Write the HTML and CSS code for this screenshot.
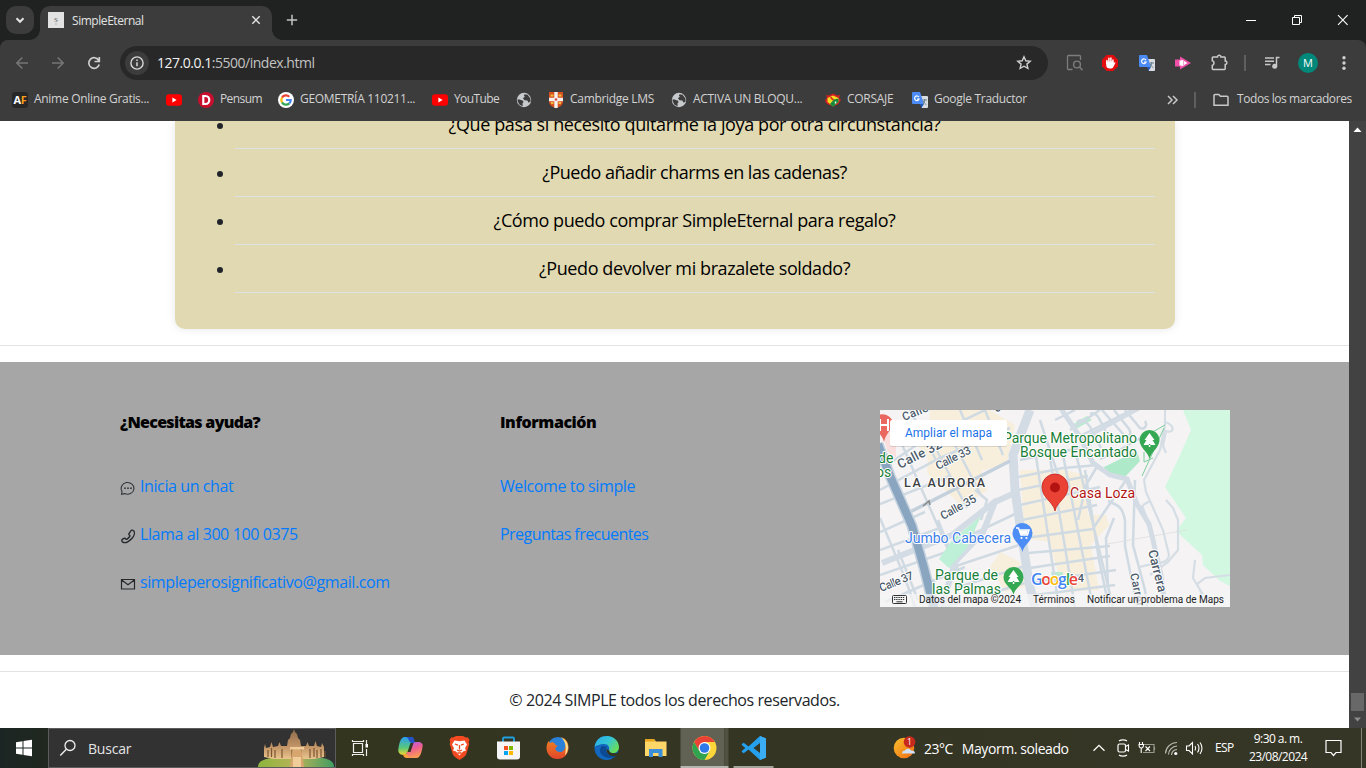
FILE: index.html
```html
<!DOCTYPE html>
<html lang="es">
<head>
<meta charset="utf-8">
<title>SimpleEternal</title>
<link rel="stylesheet" href="styles.css">
</head>
<body>
<svg width="0" height="0" class="defs">
  <defs>
    <symbol id="yt" viewBox="0 0 16 16"><rect y="2.2" width="16" height="11.6" rx="3" fill="#f00"/><path d="M6.4 5.6v4.8L10.6 8z" fill="#fff"/></symbol>
    <symbol id="globe" viewBox="0 0 16 16"><circle cx="8" cy="8" r="7.2" fill="#c7cacd"/><path d="M1.800 7.200l1.700.3 3.600 1.200.4 1.600-1 1 .2 3-3.200-1.500L1.500 9zM8.600 2.200l3 .6 2.600 3.400.5 3-2 1.600-1.400-2.300-2.800-.3L6.900 6.200l1.900-1.400-.9-1.300z" fill="#3c3c3c"/></symbol>
    <symbol id="trad" viewBox="0 0 16 16"><path d="M6 4h9a1 1 0 0 1 1 1v10a1 1 0 0 1-1 1H10z" fill="#d9dce0"/><path d="M1 0h7l4 12H1a1 1 0 0 1-1-1V1a1 1 0 0 1 1-1z" fill="#4c8bf5"/><path d="M8 12h4l-2.600 4z" fill="#1f56b8"/><path d="M6.900 5.100A2.300 2.300 0 1 0 7.100 7H5" fill="none" stroke="#fff" stroke-width="1.200"/><path d="M10.500 8h4.500M12.700 7v1c0 2-1 3.500-2 4.300M11.400 9c.6 1.800 1.600 2.800 3 3.600" fill="none" stroke="#5c7684" stroke-width=".9"/></symbol>
    <linearGradient id="cop2" x2=".3" y2="1"><stop offset="0" stop-color="#b25cf0"/><stop offset=".5" stop-color="#ee5f90"/><stop offset="1" stop-color="#fb9a55"/></linearGradient>
    <linearGradient id="cop0" y2="1" x2="0"><stop offset="0" stop-color="#2a9df0"/><stop offset=".6" stop-color="#58c878"/><stop offset="1" stop-color="#f4d52e"/></linearGradient>
    <linearGradient id="edgeg" x2="1" y2=".6"><stop offset="0" stop-color="#2aa9e8"/><stop offset=".55" stop-color="#34c6d6"/><stop offset="1" stop-color="#69dc5b"/></linearGradient>
    <linearGradient id="ff" y2="1" x2="0"><stop offset="0" stop-color="#f08a22"/><stop offset="1" stop-color="#e0452a"/></linearGradient>
    <linearGradient id="sun" y2="1" x2="1"><stop offset="0" stop-color="#fbc02d"/><stop offset="1" stop-color="#ee6a12"/></linearGradient>
    <linearGradient id="stone" y2="1" x2="0"><stop offset="0" stop-color="#8d6a4b"/><stop offset=".6" stop-color="#c39566"/><stop offset="1" stop-color="#e9c48e"/></linearGradient>
    <linearGradient id="grass" x2="1" y2="0"><stop offset="0" stop-color="#8bb53d"/><stop offset=".5" stop-color="#b9b358"/><stop offset="1" stop-color="#3f9e62"/></linearGradient>
  </defs>
</svg>

<header class="tabs">
  <div class="tabsearch"><svg width="28" height="28" viewBox="0 0 28 28"><path d="M10.500 12.300l3.500 3.500 3.500-3.500" fill="none" stroke="#e4e4e4" stroke-width="2"/></svg></div>
  <div class="tab">
    <svg width="16" height="16" viewBox="0 0 16 16"><rect width="16" height="16" fill="#e2e2e2"/><text x="8" y="10" font-size="7" text-anchor="middle" fill="#555" font-family="Liberation Serif, serif">S</text><path d="M7 12h2" stroke="#999" stroke-width=".7"/></svg>
    <span class="tabtitle">SimpleEternal</span>
    <svg width="10" height="10" viewBox="0 0 10 10"><path d="M1.300 1.300l7.400 7.400M8.700 1.300L1.300 8.700" stroke="#e0e0e0" stroke-width="1.500"/></svg>
  </div>
  <svg class="plus" width="12" height="12" viewBox="0 0 12 12"><path d="M6 .8v10.400M.8 6h10.400" stroke="#c4c4c4" stroke-width="1.500"/></svg>
  <div class="winbtns">
    <svg width="46" height="40" viewBox="0 0 46 40"><path d="M18 20.500h10" stroke="#fff"/></svg>
    <svg width="46" height="40" viewBox="0 0 46 40"><path d="M18.500 17.500h7v7h-7zM20.500 17.500v-2h7v7h-2" fill="none" stroke="#fff"/></svg>
    <svg width="46" height="40" viewBox="0 0 46 40"><path d="M18 15.200l9.600 9.600M27.600 15.200L18 24.800" stroke="#fff" stroke-width="1.100"/></svg>
  </div>
</header>

<section class="chrome">
<div class="toolbar">
  <svg viewBox="0 0 36 36"><path d="M24 18H13M18.300 12.500L12.800 18l5.500 5.500" fill="none" stroke="#757575" stroke-width="1.600"/></svg>
  <svg viewBox="0 0 36 36"><path d="M12 18h11M17.700 12.500l5.500 5.500-5.500 5.500" fill="none" stroke="#757575" stroke-width="1.600"/></svg>
  <svg viewBox="0 0 36 36"><path d="M22.600 15.200A5.300 5.300 0 1 0 23.200 19.500M23.300 12v4.500h-4.800" fill="none" stroke="#d0d0d0" stroke-width="1.700"/></svg>
  <div class="omni">
    <i class="info"><svg width="14" height="14" viewBox="0 0 14 14"><circle cx="7" cy="7" r="6.100" fill="none" stroke="#d8d8d8" stroke-width="1.400"/><path d="M7 6.200v4M7 3.600V5" stroke="#d8d8d8" stroke-width="1.500"/></svg></i>
    <span class="url"><b>127.0.0.1</b>:5500/index.html</span>
    <svg class="star" width="16" height="16" viewBox="0 0 16 16"><path d="M8 1.800l1.800 4 4.400.4-3.300 2.900 1 4.300L8 11.200l-3.900 2.200 1-4.300L1.800 6.200l4.400-.4z" fill="none" stroke="#cfcfcf" stroke-width="1.400"/></svg>
  </div>
  <svg viewBox="0 0 36 36"><path d="M24.500 15v-3.500a1 1 0 0 0-1-1h-11a1 1 0 0 0-1 1v12a1 1 0 0 0 1 1h4" fill="none" stroke="#7d7d7d" stroke-width="1.300"/><circle cx="21" cy="19.500" r="3.400" fill="none" stroke="#7d7d7d" stroke-width="1.400"/><path d="M23.500 22l3 3.300" stroke="#7d7d7d" stroke-width="1.500"/></svg>
  <svg viewBox="0 0 36 36"><path d="M14.700 10h6.600l4.700 4.700v6.600L21.300 26h-6.600L10 21.300v-6.600z" fill="#e40d0d"/><path d="M14.900 18.500v-3M16.900 17v-3.800M18.900 17v-4M20.900 18v-3" stroke="#fff" stroke-width="1.500" stroke-linecap="round"/><path d="M14.200 16.500h7.400v2l1.300-1.500.6.700-2.300 4.500c-.6 1-1.500 1.300-3.200 1.300-2.400 0-3.800-1-3.800-3.500z" fill="#fff"/></svg>
  <svg viewBox="0 0 36 36"><use href="#trad" x="10" y="10" width="16" height="16"/></svg>
  <svg viewBox="0 0 36 36"><path d="M10 14.500h5V11.500L26 18l-11 6.500v-3h-5z" fill="#f04fa8"/><path d="M14.500 15.500h2v-1l6 3.500-6 3.500v-1h-2z" fill="#fff"/><path d="M18.500 15v6" stroke="#f6a1d0"/></svg>
  <svg viewBox="0 0 36 36"><path d="M12.500 12h4a1.700 1.700 0 1 1 3.400 0h3.600a.7.700 0 0 1 .7.700v3.400a1.700 1.700 0 1 1 0 3.400v4.300a.7.700 0 0 1-.7.700H12a.7.700 0 0 1-.7-.7v-3.400a2.400 2.400 0 0 0 0-4.600v-3.100a.7.700 0 0 1 .7-.7z" fill="none" stroke="#cbcbcb" stroke-width="1.500"/></svg>
  <i class="sep"></i>
  <svg viewBox="0 0 36 36"><path d="M11 13h9M11 16.300h9M11 19.600h5.500M22.500 21v-8.500H25.500" fill="none" stroke="#c8c8c8" stroke-width="1.500"/><circle cx="20.700" cy="21.300" r="2.500" fill="#c8c8c8"/></svg>
  <i class="avatar">M</i>
  <svg viewBox="0 0 36 36" fill="#cfcfcf"><circle cx="18" cy="12.700" r="1.700"/><circle cx="18" cy="18" r="1.700"/><circle cx="18" cy="23.300" r="1.700"/></svg>
</div>
<nav class="marks">
  <svg viewBox="0 0 16 16"><rect width="16" height="16" rx="3" fill="#272727"/><text x="1.500" y="12.200" font-size="10.500" font-weight="700" textLength="13" lengthAdjust="spacingAndGlyphs" fill="#fff" font-family="Open Sans, sans-serif">A<tspan fill="#f9a11b">F</tspan></text></svg><span>Anime Online Gratis...</span>
  <svg viewBox="0 0 16 16"><use href="#yt"/></svg>
  <svg viewBox="0 0 16 16"><circle cx="8" cy="8" r="8" fill="#c8102e"/><path d="M5.300 4h2.200c5 0 5 8 0 8H5.300z" fill="none" stroke="#fff" stroke-width="2.200"/></svg><span class="tight">Pensum</span>
  <svg viewBox="0 0 16 16"><circle cx="8" cy="8" r="8" fill="#fff"/><g fill="none" stroke-width="2.200"><path d="M11.300 4.700A4.700 4.700 0 0 0 4 5.600" stroke="#ea4335"/><path d="M4 5.600a4.700 4.700 0 0 0 0 4.800" stroke="#fbbc05"/><path d="M4 10.400a4.700 4.700 0 0 0 7.300 1" stroke="#34a853"/><path d="M11.300 11.400A4.700 4.700 0 0 0 12.700 8H8" stroke="#4285f4"/></g></svg><span>GEOMETRÍA 110211...</span>
  <svg viewBox="0 0 16 16"><use href="#yt"/></svg><span class="tight">YouTube</span>
  <svg viewBox="0 0 16 16"><use href="#globe"/></svg>
  <svg viewBox="0 0 16 16"><path d="M1 0h14v9c0 4-3 6-7 7-4-1-7-3-7-7z" fill="#d8501f"/><path d="M8 0v16M1 7.500h14" stroke="#f4f1ee" stroke-width="3.400"/><path d="M2.500 3.500h3M10.500 3.500h3M3 11h2.500M10.500 11H13" stroke="#f0b83a" stroke-width="2"/><path d="M6.800 7.500h2.400" stroke="#d33" stroke-width="2"/></svg><span>Cambridge LMS</span>
  <svg viewBox="0 0 16 16"><use href="#globe"/></svg><span>ACTIVA UN BLOQU...</span>
  <svg viewBox="0 0 16 16"><path d="M1 3l3 .5 4-2 4 2L15 3l-1 3 2 2-2 3-2 2H4l-3-2-1-3 2-2z" fill="#d42020"/><path d="M2.500 6L8 3.500 13.500 6v4L8 14.500 2.500 10z" fill="#f4d922"/><path d="M8 14.500l5.500-4.500V6.500L9 7.500 5 12z" fill="#138a3c"/><path d="M5.500 5.300l3 3" stroke="#d42020" stroke-width="1.600"/><path d="M10.500 9.500v2" stroke="#fff" stroke-width="1.400"/></svg><span>CORSAJE</span>
  <svg viewBox="0 0 16 16"><use href="#trad"/></svg><span>Google Traductor</span>
  <svg viewBox="0 0 16 16"><path d="M2 4l4 4-4 4M7 4l4 4-4 4" fill="none" stroke="#c8c8c8" stroke-width="1.500"/></svg>
  <i class="sep"></i>
  <svg viewBox="0 0 16 16"><path d="M1 13.200V3.500a1 1 0 0 1 1-1h3.800l1.600 1.800H14a1 1 0 0 1 1 1v7.900z" fill="none" stroke="#c8c8c8" stroke-width="1.500"/></svg><span class="all">Todos los marcadores</span>
</nav>
</section>

<div class="view">
<main class="page">
  <section class="card">
    <ul>
      <li class="q1">¿Qué pasa si necesito quitarme la joya por otra circunstancia?</li>
      <li class="q2">¿Puedo añadir charms en las cadenas?</li>
      <li class="q3">¿Cómo puedo comprar SimpleEternal para regalo?</li>
      <li class="q4">¿Puedo devolver mi brazalete soldado?</li>
    </ul>
  </section>
  <hr>
  <footer>
    <div>
      <h5>¿Necesitas ayuda?</h5>
      <p><svg width="16" height="16" viewBox="0 0 16 16"><path d="M1.600 14.300l.4-3A6.400 5.900 0 1 1 4.600 13.600z" fill="none" stroke="#30343a" stroke-width="1.100"/><g fill="#30343a"><circle cx="5" cy="8.200" r=".9"/><circle cx="8" cy="8.200" r=".9"/><circle cx="11" cy="8.200" r=".9"/></g></svg><a>Inicia un chat</a></p>
      <p><svg width="16" height="16" viewBox="0 0 16 16"><path d="M10.700 3.200c.5-1 1.700-1.500 2.700-.7 1.700 1.600 1.200 5-1.800 8.200-3.200 3.400-7 4.600-9.200 3.100-.9-.8-.7-2 .2-2.600l1.500-.8c.7-.3 1.300 0 1.800.7.300.4.700.3 1.200 0 1-.7 1.900-1.600 2.600-2.600.4-.6.300-.9-.1-1.200-.8-.5-1-1-.6-1.700z" fill="none" stroke="#25282c" stroke-width="1.400"/></svg><a>Llama al 300 100 0375</a></p>
      <p><svg width="16" height="16" viewBox="0 0 16 16"><path d="M1.500 3.500h13v9.500h-13zM1.700 4L8 8.800 14.300 4" fill="none" stroke="#25282c" stroke-width="1.200"/></svg><a>simpleperosignificativo@gmail.com</a></p>
    </div>
    <div>
      <h5 class="info-title">Información</h5>
      <p><a>Welcome to simple</a></p>
      <p><a class="faq">Preguntas frecuentes</a></p>
    </div>
    <svg class="map" width="350" height="197" viewBox="0 0 350 197">
      <rect width="350" height="197" fill="#f5f3f4"/>
      <g fill="#f7efdc">
        <path d="M50 0h60l25 15-8 38-25 8 5 20-25 15-35-33z"/>
        <path d="M35 32l30-20 20 45-22 10z"/>
        <path d="M140 60l45 0 20 5 3 40 18 0 3 10-18 20 8 45-35 2-15-50-24-4z"/>
        <path d="M120 142l20 10 5 25-20 5-15-25z"/>
        <path d="M145 85h30v25h-30z"/>
      </g>
      <path d="M0 18l16 8 0 22-8-6z" fill="#fbdede"/>
      <path d="M303 0l8 20-11 25-15 32 21 31-10 13 26 24 1 10 17 16 10 5V0z" fill="#d3f8e2"/>
      <g fill="#b8ecd0"><path d="M224 57l33-16 3 10-18 19-14-5z" fill="#aee9c9"/><path d="M192 15l15-9 5 4-16 9zM171 162h12v8h-10z"/></g>
      <g fill="none" stroke="#d0dae3" stroke-width="2.500">
        <path d="M0 60L48 27 105 0M0 80L60 48 130 18M0 94L70 66M0 122L45 102M0 140L60 118M0 165l75-26M5 192l80-35M80 130l55-26M70 158l75-25M75 178l70-22M65 197l80-24"/>
        <path d="M20 30l33 75 26 60M45 18l42 80M62 10l40 77M80 0l22 50M105 0l18 45M30 0l26 50M58 110l22 55M95 80l12 10-6 20M0 108l25 60 10 29M18 140l20 50"/>
        <path d="M140 50l60-12M133 68l50-10 35-3M138 80l70-14M140 95l80-18M142 110l75-15M145 128l68-9M148 143l82-7M150 158l80-12M152 172l84-12M155 185l80-10"/>
        <path d="M155 40l24 157M170 48l25 149M183 45l30 152M197 48l36 149M160 10l18 55M218 55l-12 20-8 35M205 60l14 90 10 47M212 120l34-50M175 10l20-10M190 20l30-20M200 26l100-50"/>
        <path d="M197 12c6-5 12 2 16 10l8 16M210 4c6-3 9 4 12 10l8 18M222 0l22 25c5 3 8-1 5-6L234 0M245 0l15 18c4 2 8-2 5-7M220 49l16-7 35-20M255 70l-2 65 12 45 2 17M228 91c10 4 15 6 17 20l0 25 12 61M234 108l-8 20 2 50"/>
      </g>
      <g fill="none" stroke="#d5dde5" stroke-width="2.200">
        <path d="M285 0v15l-5 25-16 30 2 12 17 38 6 25c-1 10-14 7-29 12M263 95l7-4M262 95l10 28M286 90l7 8 5 12v30l-10 12-18 13M285 12c10 3 10 12 1 9l-3 15 3 7M315 150l-2 18 12 20M350 165l-25 3-8 6 5 10 10 8"/>
      </g>
      <path d="M227 134l80-14" stroke="#ddd" stroke-width=".7"/>
      <path d="M262 66l22-48M285 15l-16 9M264 42v10l9-4" fill="none" stroke="#7bcf9d" stroke-width="1"/>
      <g fill="none" stroke="#d3dce5">
        <path d="M150 0l-17 45 2 35 5 35 9 58 6 24" stroke-width="9"/>
        <path d="M137 82l-22 10-12 30-28 30-13 45M117 90l-45 35-70 28" stroke-width="6"/>
        <path d="M180 -3l20 30 13 26 17 12 17 4 10 25 12 20 4 16 8 35 4 32" stroke-width="5"/>
        <path d="M210 25l70-38" stroke-width="4"/>
      </g>
      <path d="M101 106l-14 32-18 20-10-9 14-20z" fill="#bdf0d6"/>
      <path d="M30 102L130 51" stroke="#c4d0dc" stroke-width="3.500"/>
      <path d="M-2 34l12 32 22 50 12 42 10 40" fill="none" stroke="#c5d2df" stroke-width="11"/>
      <path d="M-2 34l12 32 22 50 12 42 10 40" fill="none" stroke="#8aa5c0" stroke-width="8"/>
      <path d="M43 96l6-5 1 4" fill="none" stroke="#8a8a8a" stroke-width="1.600"/>
      <g class="street">
        <text transform="translate(24 11) rotate(-22)" textLength="27">Calle</text>
        <text transform="translate(20 59) rotate(-27)" font-size="13" textLength="48">Calle 32</text>
        <text transform="translate(58 60) rotate(-27)" textLength="38">Calle 33</text>
        <text transform="translate(63 110) rotate(-29)" textLength="39">Calle 35</text>
        <text transform="translate(1 182) rotate(-22)" textLength="36">Calle 37</text>
        <text transform="translate(117 3) rotate(-40)" font-size="12">8</text>
        <text x="188" y="172" textLength="16">A4</text>
        <text transform="translate(268 141) rotate(76)" font-size="13" textLength="43">Carrera</text>
        <text transform="translate(250 164) rotate(78)" textLength="40">Carrera</text>
      </g>
      <text class="zone" x="24" y="77" textLength="81">LA AURORA</text>
      <g class="park">
        <text x="123" y="33" textLength="134">Parque Metropolitano</text>
        <text x="140" y="47" textLength="117">Bosque Encantado</text>
        <text x="55" y="170" textLength="63">Parque de</text>
        <text x="52" y="184" textLength="69">las Palmas</text>
        <text x="-2" y="53">de</text><text x="-4" y="67">os</text>
      </g>
      <text class="shop" x="25" y="133" textLength="106">Jumbo Cabecera</text>
      <text class="casa" x="190" y="88" textLength="65">Casa Loza</text>
      <path d="M-8 12a11 11 0 0 1 21 0c0 8-7 10-9 20-2-10-12-12-12-20z" fill="#e9685f"/>
      <path d="M0 9v12M8 9v12M0 15h8" stroke="#fff" stroke-width="2"/>
      <path d="M269.500 49c-1-7-10-11-10-19a10 10 0 0 1 20 0c0 8-9 12-10 19z" fill="#34a853"/>
      <path d="M269.500 23l-5 7h2l-3 5h12l-3-5h2zM268.800 34h1.500v3h-1.500z" fill="#fff"/>
      <path d="M133.500 185c-1-7-10-10-10-18a10 10 0 0 1 20 0c0 8-9 11-10 18z" fill="#34a853"/>
      <path d="M133.500 160l-5 7h2l-3 5h12l-3-5h2zM132.800 171h1.500v3h-1.500z" fill="#fff"/>
      <path d="M142.500 142c-1-7-10-11-10-19a10 10 0 0 1 20 0c0 8-9 12-10 19z" fill="#4c8df6"/>
      <path d="M136 118h2.500l2.500 7h6.500l1.500-5h-9" fill="none" stroke="#fff" stroke-width="1.500"/><path d="M139.500 120.500h8.500l-1 4h-6z" fill="#fff"/><circle cx="141.500" cy="128" r="1.100" fill="#fff"/><circle cx="146.500" cy="128" r="1.100" fill="#fff"/>
      <path d="M175 101c-1.500-9-13-13-13-24a13 13 0 0 1 26 0c0 11-11.500 15-13 24z" fill="#ea4335" stroke="#c5221f" stroke-width=".8"/>
      <circle cx="175" cy="77.500" r="5" fill="#b31412"/>
      <rect x="10" y="11" width="117" height="26" rx="2" fill="#000" opacity=".12"/>
      <rect x="10" y="10" width="117" height="26" rx="2" fill="#fff"/>
      <text x="25" y="27" class="big" textLength="87">Ampliar el mapa</text>
      <text x="151" y="175" class="goog" textLength="47"><tspan fill="#4285f4">G</tspan><tspan fill="#ea4335">o</tspan><tspan fill="#fbbc05">o</tspan><tspan fill="#4285f4">g</tspan><tspan fill="#34a853">l</tspan><tspan fill="#ea4335">e</tspan></text>
      <rect y="184" width="350" height="13" fill="#f5f5f5" opacity=".72"/>
      <rect x="12.500" y="185.500" width="14" height="8" rx="1" fill="none" stroke="#333"/><path d="M14 187.500h11M14 189.500h11" stroke="#333" stroke-dasharray="1.400 .8"/><path d="M16.500 191.800h6" stroke="#333"/>
      <g class="legal"><text x="39" y="193" textLength="102">Datos del mapa ©2024</text><text x="153" y="193" textLength="42">Términos</text><text x="207" y="193" textLength="137">Notificar un problema de Maps</text></g>
    </svg>
  </footer>
  <hr>
  <p class="copy">© 2024 SIMPLE todos los derechos reservados.</p>
</main>
<aside class="scroll">
  <svg width="17" height="17" viewBox="0 0 17 17"><path d="M4.500 11L8.500 6.500l4 4.500z" fill="#fff"/></svg>
  <i></i>
  <svg width="17" height="17" viewBox="0 0 17 17"><path d="M5 6.500h7L8.500 10.500z" fill="#8b8b8b"/></svg>
</aside>
</div>

<div class="taskbar">
  <svg viewBox="0 0 48 40"><path d="M16 14.200l6.500-1v6.300H16zM23.500 13l8.500-1.200v7.700h-8.500zM16 20.500h6.500v6.300l-6.500-1zM23.500 20.500H32v7.700L23.500 27z" fill="#fff"/></svg>
  <div class="search">
    <svg width="18" height="18" viewBox="0 0 18 18"><circle cx="11" cy="6.500" r="5" fill="none" stroke="#eee" stroke-width="1.300"/><path d="M7.300 10.300L1.300 16.500" stroke="#eee" stroke-width="1.400"/></svg>
    <span>Buscar</span>
    <svg class="temple" width="78" height="38" viewBox="0 0 78 38"><path d="M1 38c0-6 6-8 14-9h50c8 1 12 4 12 9z" fill="url(#grass)"/><path d="M7 19l1-4 1 4 4-1 1.500-5 1.500 5 5-1 1.500-4 1.500 4h6l1-6 2-2 1-4 2-2 1-3 1 3 2 2 1 4 2 2 1 6h5l1.500-4 1.500 4 5 0 1.500-5 1.500 5 4 1 1-4 2 4v10l-10 2H16L7 28z" fill="url(#stone)"/><path d="M11 21v7M18 21v8M25 20v9M53 20v9M60 21v8M68 22v6M35 20v9M44 20v9M14.500 19v9M57 19v9M64 20v8" stroke="#7c5532" stroke-width="1.200"/><path d="M33 38l2.500-17h9L47 38z" fill="#d7a66e"/><path d="M36 28h8v10h-8zM33 18h14v2.500H33z" fill="#f0cd98"/></svg>
  </div>
  <svg viewBox="0 0 48 40"><path d="M17.500 15.500h9v9h-9zM16.500 12v1.500h11V12M16.500 28v-1.500h11V28M30.500 12v6M30.500 21v7" fill="none" stroke="#eee" stroke-width="1.200"/><path d="M29.500 16h2.500v3.500h-2.500z" fill="#fff"/></svg>
  <div class="apps">
    <svg viewBox="0 0 49 40"><path d="M12.500 20c1-6 2.500-11 6-11h6c3 0 3 2 4 6h-4l-3 9c-1 2-1.500 3-4 3-4 0-6-3-5-7z" fill="url(#cop0)"/><path d="M20 9h5c3 0 3 2 4 6h-3c-3 0-3-5-6-6z" fill="#2450c8"/><path d="M36.500 19c-1 6-2.500 11-6 11h-6c-3 0-3-2-4-6h4l3-9c1-1 1.500-1 4-1 4 0 6 2 5 5z" fill="url(#cop2)"/><path d="M20 30c-2-1-3-2-3-4h4c1 1 1 3 3 4z" fill="#f9a13c"/></svg>
    <svg viewBox="0 0 49 40"><path d="M18 9.500l3-1.500h7l3 1.500 1.500-.3 2 2.600-.8 2.200.6 2-3 10c-.5 2-3.500 4-6.800 6-3.300-2-6.300-4-6.800-6l-3-10 .6-2-.8-2.200 2-2.600z" fill="#f34a22"/><path d="M19.500 12.500l5 .8 5-.8 2.500 4-2 3.800 1 2.200-3 1-3.500 4-3.500-4-3-1 1-2.200-2-3.800z" fill="#fff"/><path d="M20 16l3 1.200M29 16l-3 1.200M24.500 17v4.500M22 22l2.500 1 2.500-1M22.500 25h4" stroke="#f34a22" stroke-width="1.300" fill="none"/></svg>
    <svg viewBox="0 0 49 40"><path d="M19 15V10.500q0-1 1-1h9q1 0 1 1V15" fill="none" stroke="#1fa0e0" stroke-width="1.800"/><path d="M13 13.500h23v15a3 3 0 0 1-3 3H16a3 3 0 0 1-3-3z" fill="#f5f5f7"/><path d="M20 18h4v4h-4z" fill="#f25022"/><path d="M25 18h4v4h-4z" fill="#7fba00"/><path d="M20 23h4v4h-4z" fill="#00a4ef"/><path d="M25 23h4v4h-4z" fill="#ffb900"/></svg>
    <svg viewBox="0 0 49 40"><circle cx="25" cy="19.500" r="10.500" fill="#2b80d8"/><path d="M27 9c7 1 9 7 8.500 12S31 31 24.500 31 13.500 26 13.500 20c0-3 1-6 2.500-7l.8 2c1-1 2.500-1 4-.6l2 2.800 2 .6-2.500 2.400c0 3 4 4.800 7 3.200 4-2 4.500-9-.3-14.400z" fill="url(#ff)"/><path d="M28 9.500c8 3 9 12 4 18 1-6 2-13-4-18z" fill="#ffe08a"/></svg>
    <svg viewBox="0 0 49 40"><circle cx="24.500" cy="20" r="12" fill="#1268bf"/><path d="M12.500 19C14 11 19 8 25 8c7 0 12 5.500 12 11 0 4-3 6-6 6-3.500 0-4.500-1.500-4-3 1-3-1-6-4.500-6-5 0-9 2-10 3z" fill="url(#edgeg)"/><path d="M20 18c-5 5 0 12 8 12 3 0 5-.7 7-2.200-4 1-11-1-11-6 0-1 .4-2 1-3z" fill="#0c4a94"/><path d="M27 22c0 2.500 3.500 4.500 9.500 2.500L34 28c-5 1-10-2-9.500-7z" fill="#34351f"/></svg>
    <svg viewBox="0 0 49 40"><path d="M14 11h9l2 2.500h10.500V28H14z" fill="#ffd668"/><path d="M14 11h9l1.500 2.500H14z" fill="#e8a51d"/><path d="M18 29v-8h13.500v8h-4v-4H22v4z" fill="#3b8fd9"/></svg>
    <svg viewBox="0 0 49 40"><path d="M.5 0h44v38H.5z" fill="#fff" opacity=".22"/><path d="M45 0h3.500v38H45z" fill="#fff" opacity=".14"/><path d="M.5 38h48v2H.5z" fill="#b5b5b0"/><circle cx="24.500" cy="20" r="12" fill="#fdd63a"/><path d="M14.100 14A12 12 0 0 1 34.900 14H24.500l-5.200 9z" fill="#ea4335"/><path d="M14.100 14A12 12 0 0 0 24.500 32l5.200-9h-10.400z" fill="#2fa34f"/><circle cx="24.500" cy="20" r="6" fill="#fff"/><circle cx="24.500" cy="20" r="4.800" fill="#3079e8"/></svg>
    <svg viewBox="0 0 49 40"><path d="M4.500 38h40v2h-40z" fill="#a3a499"/><path d="M31 8l6 2.600v18.800L31 32 19.500 21.500l-4.700 3.700-2-1.300v-1l3.500-2.900-3.500-3v-1l2-1.300 4.700 3.700zM31 15l-6.500 5 6.500 5z" fill="#24a0ec" fill-rule="evenodd"/><path d="M31 8l6 2.600v18.800L31 32z" fill="#3aadf5"/></svg>
  </div>
  <div class="weather">
    <svg width="24" height="24" viewBox="0 0 24 24"><circle cx="11" cy="12" r="10.300" fill="url(#sun)"/><path d="M9 17.500c0-2 1.500-3 3-3 1-2 5-2.500 6 0 3 0 4 1 4 3H9z" fill="#cfe0f7"/><circle cx="16.500" cy="6" r="5.800" fill="#c8291e"/><text x="16.500" y="9" font-size="8.500" text-anchor="middle" fill="#fff" font-family="Open Sans, sans-serif">1</text></svg>
    <span class="temp">23°C</span><span class="sky">Mayorm. soleado</span>
  </div>
  <div class="tray">
    <svg viewBox="0 0 24 40"><path d="M6.500 22.800L12 17.300l5.500 5.500" fill="none" stroke="#fff" stroke-width="1.300"/></svg>
    <svg viewBox="0 0 24 40"><rect x="7" y="16" width="7.500" height="8" rx="1.500" fill="none" stroke="#fff" stroke-width="1.200"/><path d="M14.500 18.500L17.500 17v6l-3-1.500M8 13c2-1.500 6-1.500 8 0M8 27c2 1.500 6 1.500 8 0" fill="none" stroke="#fff" stroke-width="1.100"/></svg>
    <svg viewBox="0 0 24 40"><path d="M9 16.500h10v8H8M19.500 19v3" fill="none" stroke="#999a8e" stroke-width="1.200"/><path d="M4.500 14v3M7.500 14v3M4 16.500h4.500c0 3-1 3.500-2.200 3.500S4 19.500 4 16.500zM6.200 20v5M10.500 18.500l4.500 4.500M15 18.500L10.500 23" fill="none" stroke="#fff" stroke-width="1.100"/></svg>
    <svg viewBox="0 0 24 40"><path d="M6.500 25.500A11.500 11.500 0 0 1 18 14.500M9.500 26.500A9 9 0 0 1 18 18M12.500 27a6 6 0 0 1 5.500-5.500" fill="none" stroke="#b9baae" stroke-width="1.200"/><circle cx="16.800" cy="25.500" r="1.600" fill="#fff"/></svg>
    <svg viewBox="0 0 24 40"><path d="M3.500 18H6l3.500-3.500v11.500L6 22.500H3.500zM12 18q1.500 2 0 4.500M14.500 16q3 4 0 8.500M17 14.500q4 5.500 0 11.500" fill="none" stroke="#fff" stroke-width="1.100"/></svg>
  </div>
  <span class="lang">ESP</span>
  <div class="clock"><span>9:30 a. m.</span><span>23/08/2024</span></div>
  <svg viewBox="0 0 48 40"><path d="M16 12.500h15v12h-5L23.500 27.500l-2.500-3h-5z" fill="none" stroke="#fff" stroke-width="1.200"/></svg>
  <i class="edge"></i>
</div>
</body>
</html>
```
FILE: styles.css
```css
* { box-sizing: border-box; }
body { margin: 0; width: 1366px; height: 768px; overflow: hidden; display: flex; flex-direction: column; font-family: "Open Sans", "Noto Sans", sans-serif; background: #202221; }
svg { display: block; flex: none; }
.defs { position: absolute; }
i { font-style: normal; }
span, a { white-space: nowrap; }

/* browser tab strip */
.tabs { height: 40px; flex: none; display: flex; align-items: center; padding-left: 6px; background: #202221; }
.tabsearch { width: 28px; height: 28px; border-radius: 10px; background: #3c3c3c; }
.tab { position: relative; width: 232px; height: 34px; margin: 6px 0 0 6px; padding: 0 11px 6px 8px; display: flex; align-items: center; background: #3c3c3c; border-radius: 10px 10px 0 0; }
.tab::before, .tab::after { content: ""; position: absolute; bottom: 0; width: 10px; height: 10px; }
.tab::before { left: -10px; background: radial-gradient(circle at 0 0, transparent 9.5px, #3c3c3c 10px); }
.tab::after { right: -10px; background: radial-gradient(circle at 100% 0, transparent 9.5px, #3c3c3c 10px); }
.tabtitle { flex: 1; margin-left: 8px; font-size: 12px; letter-spacing: -.45px; color: #e3e3e3; }
.plus { margin-left: 14px; }
.winbtns { display: flex; margin-left: auto; }

/* toolbar and bookmarks */
.chrome { height: 81px; flex: none; background: #3c3c3c; border-radius: 8px 8px 0 0; }
.toolbar { height: 45px; padding-left: 4px; display: grid; grid-template-columns: 36px 36px 40px 928px 11.500px 36px 37px 36px 36px 36px 17.500px 36px 36px 36px; align-items: center; }
.toolbar > svg { width: 36px; height: 36px; }
.toolbar > :nth-child(5) { grid-column: 6; }
.omni { height: 34px; margin: 1px 0 0 4px; width: 928px; border-radius: 17px; background: #282828; display: flex; align-items: center; padding: 0 16px 0 5px; }
.info { width: 24px; height: 24px; border-radius: 12px; background: #3c3c3c; display: grid; place-items: center; }
.url { margin: -1px 0 0 8px; font-size: 14px; letter-spacing: -.48px; color: #c3c3c3; }
.url b { font-weight: 400; color: #f1f1f1; }
.star { margin-left: auto; }
.sep { width: 2px; height: 16px; justify-self: center; background: #5f5f5f; }
.avatar { width: 20px; height: 20px; border-radius: 10px; justify-self: center; background: #00897b; color: #fff; font-size: 11px; line-height: 20px; text-align: center; }
.marks { height: 29px; padding-left: 12px; display: grid; align-items: center; grid-template-columns: 22px 132px 32px 22px 58px 22px 132px 22px 62px 32px 22px 101px 22px 132px 22px 65px 22px 232px 28px 19px 24px 1fr; font-size: 12px; line-height: 16px; letter-spacing: -.3px; color: #d2d2d2; }
.marks svg { width: 16px; height: 16px; }
.marks span { margin-top: -1px; }
.marks .sep { justify-self: start; }
.marks .all { letter-spacing: -.43px; }
.marks .tight { letter-spacing: -.6px; }

/* visible page */
.view { height: 607px; flex: none; display: flex; overflow: hidden; }
.page { width: 1349px; height: 607px; background: #fff; overflow: hidden; display: flex; flex-direction: column; color: #212529; }
.card { width: 1000px; height: 208px; flex: none; margin: 0 auto 16px; padding: 0 20px 0 60px; background: #e1d9b2; border-radius: 0 0 10px 10px; box-shadow: 0 0 10px rgba(0,0,0,.1); }
.card ul { margin: -20px 0 0; padding: 0; }
.card li { height: 48px; border-bottom: 1px solid #dee2e6; position: relative; list-style: none; text-align: center; color: #000; font-size: 18px; font-weight: 400; line-height: 46px; }
.q1 { letter-spacing: -.39px; }
.q2 { letter-spacing: -.5px; }
.q3 { letter-spacing: -.43px; }
.q4 { letter-spacing: -.4px; }
.card li::before { content: ""; position: absolute; left: -18px; top: 22px; width: 6px; height: 6px; border-radius: 3px; background: #212529; }
.page hr { width: 100%; height: 1px; flex: none; margin: 0 0 16px; border: 0; background: #e3e3e3; }
footer { height: 293px; flex: none; margin-bottom: 16px; padding: 48px 0 0 120px; background: #a6a6a6; display: grid; grid-template-columns: 380px 380px 350px; align-items: start; font-size: 16px; }
footer h5 { margin: 0 0 39px; font-size: 16px; line-height: 25px; font-weight: 800; color: #000; letter-spacing: -.7px; }
footer .info-title { letter-spacing: -.45px; }
footer p { margin: 0 0 24px; height: 24px; line-height: 24px; display: flex; gap: 4px; }
footer p svg { margin-top: 6px; }
footer a { color: #007bff; letter-spacing: -.4px; }
footer .faq { letter-spacing: -.55px; }
.copy { margin: 0; text-align: center; font-size: 16px; line-height: 24px; letter-spacing: -.42px; color: #212529; }
.map { font-family: Roboto, sans-serif; overflow: hidden; }
.map text { paint-order: stroke; stroke: #fff; stroke-width: 2px; stroke-linejoin: round; }
.street { font-size: 11.500px; font-weight: 500; fill: #4d5c6b; }
.zone { font-size: 12.500px; font-weight: 500; fill: #3c4043; }
.park { font-size: 14px; fill: #188038; }
.shop { font-size: 14px; fill: #3b7de8; }
.casa { font-size: 14px; fill: #b31412; }
.big { font-size: 12px; fill: #1a73e8; }
.goog { font-size: 16px; font-weight: 600; font-family: "Open Sans", sans-serif; }
.map .legal text { font-size: 10px; fill: #222; stroke: none; }
.scroll { width: 17px; background: #424242; display: flex; flex-direction: column; }
.scroll i { width: 13px; height: 18px; margin: auto 2px 0; background: #686868; }

/* taskbar */
.taskbar { height: 40px; flex: none; display: flex; background: linear-gradient(90deg, #1b2523 0, #22291f 60px, #33351f 340px, #353524 700px, #363626 100%); color: #fff; }
.taskbar > svg { width: 48px; height: 40px; }
.search { width: 288px; border: 1px solid #5c5c5c; background: #323232; display: flex; align-items: center; padding-left: 10px; font-size: 14px; color: #e4e4e4; }
.search span { margin-left: 11px; letter-spacing: -.2px; }
.temple { margin-left: auto; }
.apps { display: flex; margin-left: 2px; }
.apps svg { width: 49px; height: 40px; }
.weather { width: 196px; margin-left: 115px; display: flex; align-items: center; font-size: 14px; }
.temp { margin-left: 7px; letter-spacing: -.5px; }
.sky { margin-left: 9px; letter-spacing: -.42px; }
.tray { display: flex; margin-left: -2px; }
.tray svg { width: 24px; height: 40px; }
.lang { width: 19px; margin-left: 8px; line-height: 40px; font-size: 12px; letter-spacing: -.6px; }
.clock { width: 70px; margin-left: 9px; padding-top: 2px; display: flex; flex-direction: column; text-align: center; font-size: 12px; line-height: 18px; letter-spacing: -.55px; }
.taskbar > svg:last-of-type { margin-left: -3px; }
.edge { width: 1px; margin-left: 3px; background: #85857b; }
```
